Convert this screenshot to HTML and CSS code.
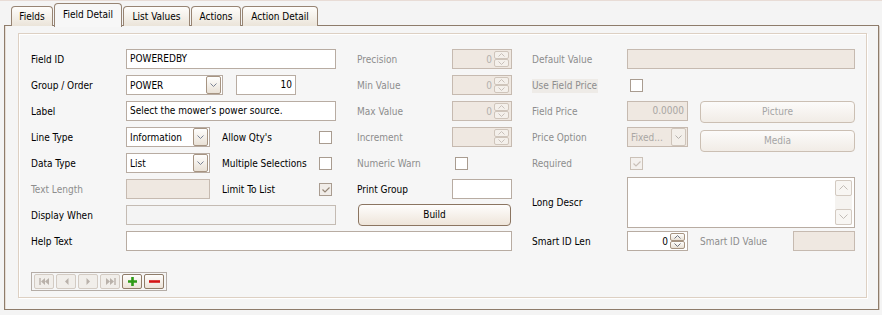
FILE: index.html
```html
<!DOCTYPE html>
<html lang="en">
<head>
    <meta charset="UTF-8">
    <title>Field Detail</title>
    <link rel="stylesheet" href="styles.css">
</head>
<body>
<div class="window">
    <div class="tabs">
        <div class="tab w-fields">Fields</div>
        <div class="tab active w-detail">Field Detail</div>
        <div class="tab w-values">List Values</div>
        <div class="tab w-actions">Actions</div>
        <div class="tab w-adetail">Action Detail</div>
    </div>

    <div class="panel">
        <div class="group">
            <div class="form">
                <!-- row 1 -->
                <span class="lbl c1">Field ID</span>
                <div class="edit c2">POWEREDBY</div>
                <span class="lbl dis c4">Precision</span>
                <div class="spin dis c5">
                    <span class="val">0</span>
                    <span class="spin-btns">
                        <i class="sbtn"><svg width="7" height="4"><path d="M.5 3.5l3-3 3 3" fill="none" stroke="#c8c0ba"/></svg></i>
                        <i class="sbtn"><svg width="7" height="4"><path d="M.5 .5l3 3 3-3" fill="none" stroke="#c8c0ba"/></svg></i>
                    </span>
                </div>
                <span class="lbl dis c7">Default Value</span>
                <div class="edit dis c8"></div>

                <!-- row 2 -->
                <span class="lbl c1">Group / Order</span>
                <div class="cell c2">
                    <div class="select w-group">
                        <span>POWER</span>
                        <span class="drop"><svg width="7" height="5"><path d="M.5 .5l3 3 3-3" fill="none" stroke="#7a8396"/></svg></span>
                    </div>
                    <div class="edit num w-order">10</div>
                </div>
                <span class="lbl dis c4">Min Value</span>
                <div class="spin dis c5">
                    <span class="val">0</span>
                    <span class="spin-btns">
                        <i class="sbtn"><svg width="7" height="4"><path d="M.5 3.5l3-3 3 3" fill="none" stroke="#c8c0ba"/></svg></i>
                        <i class="sbtn"><svg width="7" height="4"><path d="M.5 .5l3 3 3-3" fill="none" stroke="#c8c0ba"/></svg></i>
                    </span>
                </div>
                <span class="lbl dis c7"><span class="hl">Use Field Price</span></span>
                <div class="cell c8"><span class="check"></span></div>

                <!-- row 3 -->
                <span class="lbl c1">Label</span>
                <div class="edit c2">Select the mower's power source.</div>
                <span class="lbl dis c4">Max Value</span>
                <div class="spin dis c5">
                    <span class="val">0</span>
                    <span class="spin-btns">
                        <i class="sbtn"><svg width="7" height="4"><path d="M.5 3.5l3-3 3 3" fill="none" stroke="#c8c0ba"/></svg></i>
                        <i class="sbtn"><svg width="7" height="4"><path d="M.5 .5l3 3 3-3" fill="none" stroke="#c8c0ba"/></svg></i>
                    </span>
                </div>
                <span class="lbl dis c7">Field Price</span>
                <div class="cell c8">
                    <div class="edit dis num w-small">0.0000</div>
                    <div class="btn off">Picture</div>
                </div>

                <!-- row 4 -->
                <span class="lbl c1">Line Type</span>
                <div class="cell c2">
                    <div class="select w-type">
                        <span>Information</span>
                        <span class="drop"><svg width="7" height="5"><path d="M.5 .5l3 3 3-3" fill="none" stroke="#7a8396"/></svg></span>
                    </div>
                    <span class="sub-lbl">Allow Qty's</span>
                    <span class="check"></span>
                </div>
                <span class="lbl dis c4">Increment</span>
                <div class="spin dis c5">
                    <span class="val"></span>
                    <span class="spin-btns">
                        <i class="sbtn"><svg width="7" height="4"><path d="M.5 3.5l3-3 3 3" fill="none" stroke="#c8c0ba"/></svg></i>
                        <i class="sbtn"><svg width="7" height="4"><path d="M.5 .5l3 3 3-3" fill="none" stroke="#c8c0ba"/></svg></i>
                    </span>
                </div>
                <span class="lbl dis c7">Price Option</span>
                <div class="cell c8">
                    <div class="select dis w-small">
                        <span>Fixed...</span>
                        <span class="drop"><svg width="7" height="5"><path d="M.5 .5l3 3 3-3" fill="none" stroke="#b4b0ac"/></svg></span>
                    </div>
                    <div class="btn off low">Media</div>
                </div>

                <!-- row 5 -->
                <span class="lbl c1">Data Type</span>
                <div class="cell c2">
                    <div class="select w-type">
                        <span>List</span>
                        <span class="drop"><svg width="7" height="5"><path d="M.5 .5l3 3 3-3" fill="none" stroke="#7a8396"/></svg></span>
                    </div>
                    <span class="sub-lbl">Multiple Selections</span>
                    <span class="check"></span>
                </div>
                <span class="lbl dis c4">Numeric Warn</span>
                <div class="cell c5"><span class="check"></span></div>
                <span class="lbl dis c7">Required</span>
                <div class="cell c8">
                    <span class="check on dis"><svg width="11" height="11"><path d="M2.5 5.5l2.5 2.5 4.5-4.5" fill="none" stroke="#c9c0b8" stroke-width="1.2"/></svg></span>
                </div>

                <!-- row 6 -->
                <span class="lbl dis c1">Text Length</span>
                <div class="cell c2">
                    <div class="edit dis w-type"></div>
                    <span class="sub-lbl">Limit To List</span>
                    <span class="check on"><svg width="11" height="11"><path d="M2.5 5.5l2.5 2.5 4.5-4.5" fill="none" stroke="#958676" stroke-width="1.2"/></svg></span>
                </div>
                <span class="lbl c4">Print Group</span>
                <div class="edit c5"></div>
                <span class="lbl c7 tall">Long Descr</span>
                <div class="memo c8 tall">
                    <div class="scroll">
                        <i class="sc-btn"><svg width="9" height="5"><path d="M.5 4.5l4-4 4 4" fill="none" stroke="#c2bcb6"/></svg></i>
                        <i class="sc-btn"><svg width="9" height="5"><path d="M.5 .5l4 4 4-4" fill="none" stroke="#c2bcb6"/></svg></i>
                    </div>
                </div>

                <!-- row 7 -->
                <span class="lbl c1">Display When</span>
                <div class="edit grey c2"></div>
                <div class="btn build c4-5">Build</div>

                <!-- row 8 -->
                <span class="lbl c1">Help Text</span>
                <div class="edit c2-5"></div>
                <span class="lbl c7">Smart ID Len</span>
                <div class="cell c8">
                    <div class="spin w-small">
                        <span class="val">0</span>
                        <span class="spin-btns">
                            <i class="sbtn on"><svg width="7" height="4"><path d="M.5 3.5l3-3 3 3" fill="none" stroke="#6f7480"/></svg></i>
                            <i class="sbtn on"><svg width="7" height="4"><path d="M.5 .5l3 3 3-3" fill="none" stroke="#6f7480"/></svg></i>
                        </span>
                    </div>
                    <span class="sub-lbl dis w-smart">Smart ID Value</span>
                    <div class="edit dis w-sval"></div>
                </div>
            </div>

            <div class="nav">
                <span class="nbtn"><svg width="11" height="7"><path d="M1 0v7" stroke="#b9b1aa" stroke-width="1.4"/><path d="M6 0v7L2 3.5z M10 0v7L6 3.5z" fill="#b9b1aa"/></svg></span>
                <span class="nbtn"><svg width="5" height="7"><path d="M4.5 0v7L1 3.5z" fill="#b9b1aa"/></svg></span>
                <span class="nbtn"><svg width="5" height="7"><path d="M.5 0v7L4 3.5z" fill="#b9b1aa"/></svg></span>
                <span class="nbtn"><svg width="11" height="7"><path d="M10 0v7" stroke="#b9b1aa" stroke-width="1.4"/><path d="M1 0v7l4-3.5z M5 0v7l4-3.5z" fill="#b9b1aa"/></svg></span>
                <span class="nbtn on"><svg width="11" height="11"><path d="M5.5 1v9M1 5.5h9" stroke="#2e9a16" stroke-width="2.6"/></svg></span>
                <span class="nbtn on"><svg width="13" height="5"><path d="M1 2.5h11" stroke="#d41414" stroke-width="2.6"/></svg></span>
            </div>
        </div>
    </div>
</div>
</body>
</html>
```

FILE: styles.css
```css
body {
    margin: 0;
    background: #f4f4f4;
    font-family: "DejaVu Sans Condensed", "DejaVu Sans", sans-serif;
    font-size: 10px;
    color: #000;
}

.window {
    border-top: 1px solid #e8dcd6;
}

/* tabs */
.tabs {
    display: flex;
    align-items: flex-end;
    gap: 1px;
    height: 21px;
    padding: 3px 0 0 11px;
    position: relative;
    z-index: 1;
}

.tab {
    box-sizing: border-box;
    height: 20px;
    margin-bottom: -1px;
    border: 1px solid #978473;
    border-bottom: none;
    border-radius: 4px 4px 0 0;
    background: linear-gradient(#fefdfb, #ebe4d9);
    text-align: center;
    line-height: 20px;
}

.tab.active {
    height: 24px;
    margin-bottom: -2px;
    background: #f7f7f7;
    line-height: 22px;
}

.w-fields { width: 42px; }
.w-detail { width: 68px; }
.w-values { width: 67px; }
.w-actions { width: 50px; }
.w-adetail { width: 76px; }

.panel {
    box-sizing: border-box;
    width: 875px;
    height: 285px;
    margin-left: 4px;
    padding: 7px 0 0 13px;
    border: 1px solid #8e7c6b;
    box-shadow: 1px 1px 0 #d9cfc6, inset 1px 0 0 #e6ddd5;
    background: #f5f5f5;
}

.group {
    box-sizing: border-box;
    width: 849px;
    height: 265px;
    padding: 15px 0 0 12px;
    border: 1px solid #ddd0c3;
    box-shadow: 1px 1px 0 #fff, inset 1px 1px 0 #fff;
    background: #f6f6f6;
}

/* form grid */
.form {
    display: grid;
    grid-template-columns: 95px 210px 21px 95px 60px 20px 95px 228px;
    grid-auto-rows: 20px;
    row-gap: 6px;
}

.c1 { grid-column: 1; }
.c2 { grid-column: 2; }
.c4 { grid-column: 4; }
.c5 { grid-column: 5; }
.c7 { grid-column: 7; }
.c8 { grid-column: 8; }
.c2-5 { grid-column: 2 / 6; }
.c4-5 { grid-column: 4 / 6; }
.tall { grid-row: span 2; }

.lbl {
    align-self: center;
    white-space: nowrap;
}

.lbl.dis,
.sub-lbl.dis {
    color: #8d8d8d;
}

.hl {
    background: #eeebe7;
    padding: 1px 1px 2px 0;
}

.cell {
    display: flex;
    align-items: center;
}

.sub-lbl {
    width: 97px;
    margin-left: 12px;
    white-space: nowrap;
}

/* edits */
.edit {
    box-sizing: border-box;
    height: 20px;
    padding: 0 3px;
    border: 1px solid #b8aca2;
    background: #fff;
    line-height: 18px;
    white-space: nowrap;
    overflow: hidden;
}

.edit.num {
    text-align: right;
}

.edit.dis {
    border-color: #c6bab0;
    background: #efe8e1;
    color: #a9a6a3;
}

.edit.grey {
    border-color: #c4bbb3;
    background: #f4f4f4;
}

.w-order { width: 60px; margin-left: 13px; }
.w-small { width: 61px; flex: none; }
.w-type { width: 84px; }
.w-group { width: 97px; }
.sub-lbl.w-smart { width: 93px; }
.w-sval { width: 62px; }

/* combos */
.select {
    box-sizing: border-box;
    height: 20px;
    display: flex;
    align-items: center;
    padding: 0 1px 0 3px;
    border: 1px solid #b8aca2;
    background: #fff;
}

.select.dis {
    border-color: #c6bab0;
    background: #efe8e1;
    color: #aaa7a4;
}

.drop {
    box-sizing: border-box;
    width: 15px;
    height: 18px;
    margin-left: auto;
    display: flex;
    align-items: center;
    justify-content: center;
    border: 1px solid #a69482;
    border-radius: 2px;
    background: linear-gradient(#fefefd, #e9e1d6);
}

.select.dis .drop {
    border-color: #cfc5bb;
    background: #f3efea;
}

/* spinners */
.spin {
    box-sizing: border-box;
    height: 20px;
    display: flex;
    align-items: center;
    padding: 0 2px 0 3px;
    border: 1px solid #b8aca2;
    background: #fff;
}

.spin.dis {
    border-color: #c6bab0;
    background: #efe8e1;
    color: #b3b0ad;
}

.spin .val {
    flex: 1;
    text-align: right;
    padding-right: 2px;
}

.spin-btns {
    display: flex;
    flex-direction: column;
}

.sbtn {
    box-sizing: border-box;
    width: 15px;
    height: 8px;
    display: flex;
    align-items: center;
    justify-content: center;
    border: 1px solid #cfc5bb;
    border-radius: 2px;
    background: #f4f0eb;
}

.sbtn.on {
    border-color: #a69482;
    background: linear-gradient(#fefefd, #e9e1d6);
}

/* checkboxes */
.check {
    box-sizing: border-box;
    width: 13px;
    height: 13px;
    margin-left: 3px;
    display: flex;
    align-items: center;
    justify-content: center;
    border: 1px solid #a99c90;
    background: #fff;
}

.sub-lbl + .check {
    margin-left: 0;
}

.check.on {
    background: #f1ede9;
}

.check.dis {
    border-color: #cbc1b7;
    background: #f4f1ee;
}

/* buttons */
.btn {
    box-sizing: border-box;
    text-align: center;
    border-radius: 4px;
}

.btn.off {
    width: 155px;
    height: 22px;
    margin-left: 12px;
    border: 1px solid #cbbfb3;
    background: linear-gradient(#fcfbfa, #f1ece6);
    color: #a5a5a5;
    line-height: 20px;
    align-self: flex-start;
    margin-top: 0;
}

.btn.off.low {
    margin-top: 3px;
}

.btn.build {
    height: 22px;
    margin: -1px 1px 0;
    border: 1px solid #8b7561;
    background: linear-gradient(#fefdfc, #eee5da);
    line-height: 20px;
}

/* long description */
.memo {
    box-sizing: border-box;
    height: 51px;
    align-self: center;
    display: flex;
    justify-content: flex-end;
    padding: 2px;
    border: 1px solid #b8aca2;
    background: #fff;
}

.scroll {
    width: 17px;
    display: flex;
    flex-direction: column;
    justify-content: space-between;
    background: #f5f3f0;
}

.sc-btn {
    box-sizing: border-box;
    height: 16px;
    display: flex;
    align-items: center;
    justify-content: center;
    border: 1px solid #d3cac1;
    border-radius: 2px;
    background: #f8f6f3;
}

/* record navigator */
.nav {
    display: inline-flex;
    gap: 2px;
    margin-top: 21px;
    padding: 1px 2px;
    border: 1px solid #b5ada7;
}

.nbtn {
    box-sizing: border-box;
    width: 20px;
    height: 15px;
    display: flex;
    align-items: center;
    justify-content: center;
    border: 1px solid #d3cbc3;
    border-radius: 2px;
    background: #f1eeea;
}

.nbtn.on {
    border-color: #8f7c69;
    background: linear-gradient(#fefdfc, #ece3d8);
}
```
